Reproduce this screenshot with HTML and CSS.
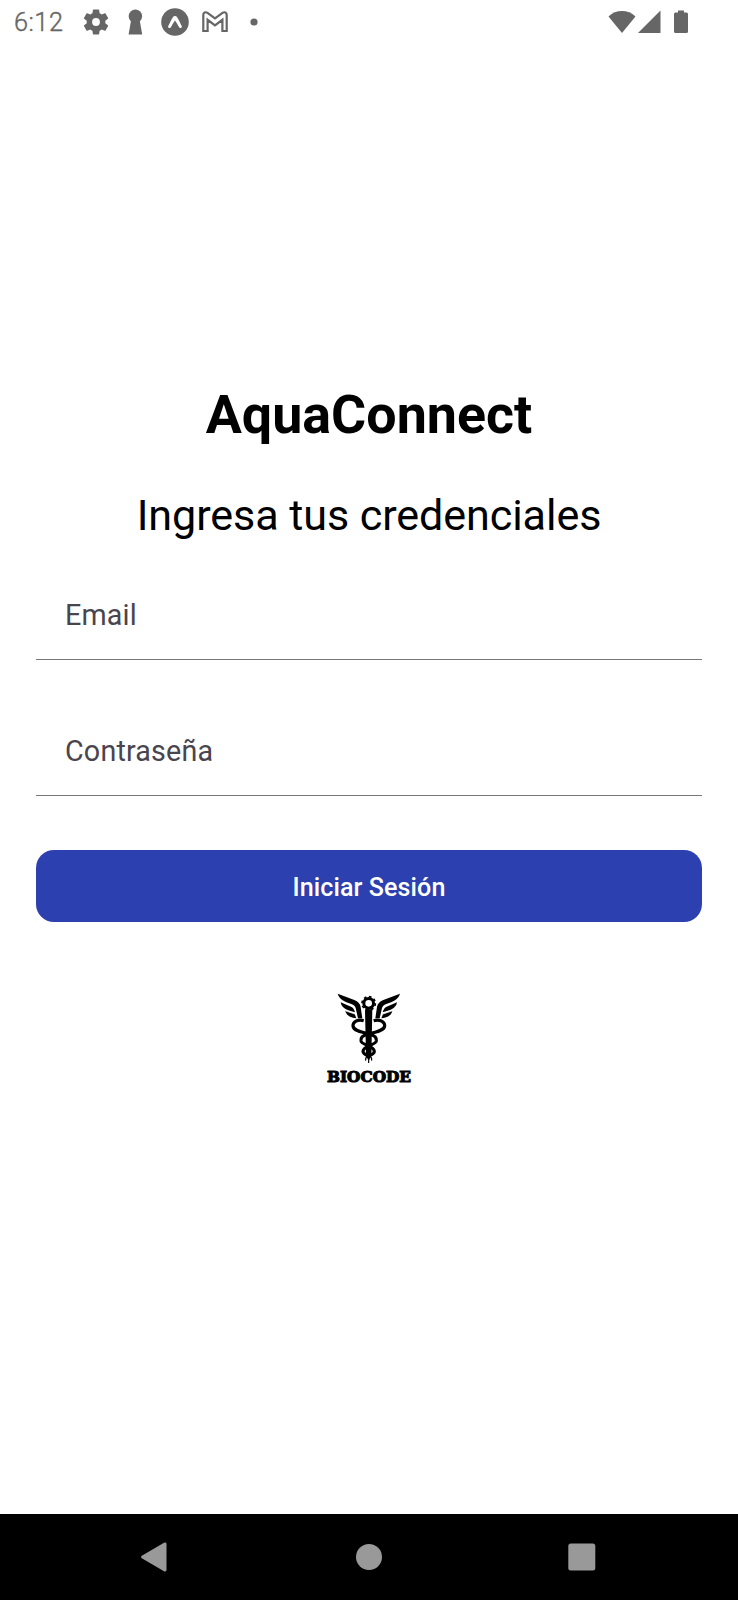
FILE: index.html
```html
<!DOCTYPE html>
<html lang="es">
<head>
<meta charset="utf-8">
<title>AquaConnect</title>
<link rel="stylesheet" href="styles.css">
</head>
<body>
<div class="screen">
  <header class="status-bar">
    <span class="clock">6:12</span>
    <div class="notifications">
      <svg width="26" height="26" viewBox="2 2 20 20"><path fill-rule="evenodd" d="M19.14 12.94a7 7 0 0 0 0-1.88l2.03-1.58a.5.5 0 0 0 .12-.61l-1.92-3.32a.5.5 0 0 0-.59-.22l-2.39.96a7 7 0 0 0-1.62-.94l-.36-2.54a.5.5 0 0 0-.48-.41h-3.84a.5.5 0 0 0-.47.41l-.36 2.54a7.400 7.400 0 0 0-1.62.94l-2.39-.96a.5.5 0 0 0-.59.22L2.740 8.870a.48.48 0 0 0 .12.61l2.030 1.580a7 7 0 0 0 0 1.880l-2.030 1.580a.5.5 0 0 0-.12.61l1.920 3.320c.12.22.37.29.59.22l2.390-.96c.5.38 1.030.7 1.620.94l.36 2.540c.05.24.24.41.48.41h3.840c.24 0 .44-.17.47-.41l.36-2.540a7 7 0 0 0 1.620-.94l2.390.96c.22.08.47 0 .59-.22l1.920-3.320a.5.5 0 0 0-.12-.61zM12 15a3 3 0 1 1 0-6 3 3 0 0 1 0 6z"/></svg>
      <svg width="26" height="26"><circle cx="13.400" cy="7.200" r="6.700"/><path d="M9.300 10h8.200l2.700 15.500H6.600z"/></svg>
      <svg width="28" height="28"><circle cx="14" cy="14" r="13.800"/><path class="mark" d="M12.200 8.800c.7-1 2.900-1 3.600 0 1.600 2.400 3.600 6.500 5.100 9.600.4.900-1.600 2.500-2.500 1.100-1.300-2-2.800-4.700-4.400-7-1.600 2.300-3.100 5-4.400 7-.9 1.400-2.900-.2-2.500-1.100 1.500-3.100 3.500-7.200 5.100-9.600z"/></svg>
      <svg width="26" height="22"><path class="outline" d="M1.300 3.900c0-2.300 2.300-3.400 4.200-2L13 7.400l7.500-5.500c1.900-1.400 4.200-.3 4.200 2V20h-4.300V8.800L13 14.300 5.600 8.800V20H1.300z"/></svg>
      <svg class="dot" width="8" height="8"><circle cx="4" cy="4" r="3.600"/></svg>
    </div>
    <div class="system">
      <svg width="28" height="24"><path d="M.5 6.500C8.200-.8 19.800-.8 27.500 6.500L14 23z"/></svg>
      <svg width="23" height="24"><path d="M22.500.500V23H0z"/></svg>
      <svg class="battery" width="14" height="24"><path d="M4 .500h6v2h2.500Q14 2.500 14 4v17.500Q14 23 12.500 23h-11Q0 23 0 21.500V4q0-1.500 1.500-1.500H4z"/></svg>
    </div>
  </header>

  <main class="login">
    <h1 class="title">AquaConnect</h1>
    <h2 class="subtitle">Ingresa tus credenciales</h2>
    <div class="field email">Email</div>
    <div class="field password">Contraseña</div>
    <button class="submit">Iniciar Sesión</button>
    <svg class="logo" viewBox="0 0 330 315">
      <g id="wing">
        <path d="M68 26 118 45q17 7 19 21l5 34h-13l-7-31q-2-9-15-13C90 50 73 43 68 26z"/>
        <path d="M77 52 108 65q9 4 12 17C99 77 80 71 77 52z"/>
        <path d="M91 77 119 87l5 13C105 97 94 91 91 77z"/>
        <path class="gap" d="M92 78 119 87"/>
      </g>
      <use href="#wing" transform="matrix(-1 0 0 1 323 0)"/>
      <circle class="cog" cx="161" cy="55" r="14.500"/>
      <circle class="teeth" cx="161" cy="55" r="20"/>
      <path d="M150 73h22l-3 140-8 14-8-14z"/>
      <path class="snake" d="M146 107c-18-5-33 4-32 16 1 14 27 19 48 24 17 4 24 11 22 21-3 13-39 14-40 31 0 7 8 11 17 14M176 107c19-5 34 4 33 16-1 14-28 19-49 24-17 4-24 11-22 21 3 13 39 14 40 31 0 7-8 11-18 14"/>
      <path class="tail" d="M161 210v24M157 213q-6 5-5 14M165 213q6 5 5 14"/>
      <text x="36" y="291" textLength="252" lengthAdjust="spacingAndGlyphs">BIOCODE</text>
    </svg>
  </main>

  <nav class="nav-bar">
    <svg width="28" height="30"><path d="M.8 13.700 23 .8Q25.500 0 25.500 2v26q0 2-2.500 1.200L.8 16.300q-1.500-1.300 0-2.600z"/></svg>
    <svg width="28" height="28"><circle cx="14" cy="14" r="13"/></svg>
    <svg width="28" height="28"><rect x=".3" y=".5" width="27" height="27" rx="2.500"/></svg>
  </nav>
</div>
</body>
</html>
```
FILE: styles.css
```css
* {
  box-sizing: border-box;
}

body {
  margin: 0;
  background: #fff;
  color: #000;
  font-family: Roboto, "Liberation Sans", sans-serif;
}

svg {
  display: block;
  flex: none;
}

.screen {
  display: flex;
  flex-direction: column;
  width: 738px;
  height: 1600px;
}

.status-bar {
  display: flex;
  align-items: center;
  height: 44px;
  padding: 0 50px 0 14px;
  color: #666;
  fill: #666;
}

.clock {
  width: 69px;
  padding-top: 2px;
  font-size: 25.3px;
  font-weight: 300;
  letter-spacing: 0.5px;
  line-height: 30px;
  -webkit-text-stroke: 0.4px #666;
}

.notifications {
  display: flex;
  align-items: center;
  gap: 13px;
}

.notifications .dot {
  margin-left: 9px;
}

.mark {
  fill: #fff;
}

.outline {
  fill: none;
  stroke: #666;
  stroke-width: 2.2;
}

.system {
  display: flex;
  gap: 2px;
  margin-left: auto;
}

.system .battery {
  margin-left: 11px;
}

.login {
  display: flex;
  flex: 1;
  flex-direction: column;
  padding: 339px 36px 0;
}

.title,
.subtitle {
  margin: 0;
  text-align: center;
}

.title {
  font-size: 53.8px;
  font-weight: 700;
  line-height: 64px;
}

.subtitle {
  margin-top: 44px;
  font-size: 43.1px;
  font-weight: 400;
  letter-spacing: -0.08px;
  line-height: 50px;
}

.field {
  height: 75px;
  padding: 10px 29px 0;
  border-bottom: 1px solid #77767a;
  color: #49454f;
  font-size: 28.7px;
  letter-spacing: 0.18px;
  line-height: 40px;
}

.email {
  margin-top: 44px;
}

.password {
  margin-top: 61px;
}

.submit {
  height: 72px;
  margin-top: 54px;
  padding: 4px 0 0;
  border: 0;
  border-radius: 18px;
  background: #2c40b0;
  color: #fff;
  font: 500 25.1px/30px Roboto, sans-serif;
  letter-spacing: 0.08px;
}

.logo {
  width: 110px;
  height: 105px;
  margin: 63px 0 0 279px;
}

.logo text {
  font: 700 43px "DejaVu Serif", serif;
  stroke: #000;
  stroke-width: 3px;
}

.cog,
.teeth,
.snake,
.tail {
  fill: none;
  stroke: #000;
}

.gap {
  stroke: #fff;
  stroke-width: 2;
}

.cog {
  stroke-width: 9;
}

.teeth {
  stroke-width: 5;
  stroke-dasharray: 8 7.708;
}

.snake {
  stroke-width: 9.5;
}

.tail {
  stroke-width: 3.5;
}

.nav-bar {
  display: flex;
  align-items: center;
  justify-content: space-between;
  height: 86px;
  padding: 0 142px 0 141px;
  background: #000;
  fill: #999;
}
```
